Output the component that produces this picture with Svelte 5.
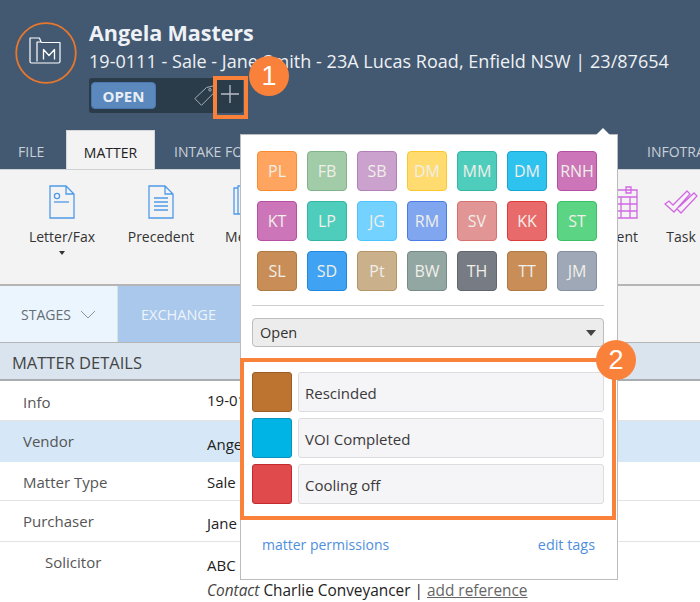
<script>
  const swatches = [
    ['PL','#ffa55f','#f98a2d'],['FB','#a2cba8','#7fb488'],['SB','#cba2cd','#b37fb8'],['DM','#ffdb70','#fcc62e'],['MM','#4ecdbd','#35b5a5'],['DM','#2ec3ef','#16a6d2'],['RNH','#cc75b8','#b64fa2'],
    ['KT','#cc75b8','#b64fa2'],['LP','#4ecdbd','#35b5a5'],['JG','#73d2ff','#4dc4fd'],['RM','#80a6f0','#4a7ce6'],['SV','#e29595','#d97070'],['KK','#e96a6a','#dd3a3a'],['ST','#5bd583','#3fbe68'],
    ['SL','#c98d58','#ae7a40'],['SD','#40a2f2','#1f88dd'],['Pt','#cbb08c','#b59565'],['BW','#92a6a2','#768b87'],['TH','#777b84','#63666f'],['TT','#c98d58','#ae7a40'],['JM','#9fa8b6','#858fa0']
  ];
  const tags = [
    ['Rescinded','#bd7431','#9a5d26'],['VOI Completed','#00b4e6','#0a93bb'],['Cooling off','#e04a4c','#c4292c']
  ];
  const rows = [
    ['Info','19-0111',''],['Vendor','Angela Masters','sel'],['Matter Type','Sale',''],['Purchaser','Jane Smith',''],['Solicitor','ABC Conveyancing','sub']
  ];
</script>

<div class="page">
  <header class="head">
    <div class="top">
      <div class="logo">
        <svg width="62" height="62" viewBox="0 0 62 62" fill="none">
          <circle cx="31" cy="31" r="29.8" stroke="#e8772e" stroke-width="1.8"/>
          <g stroke="#fff" stroke-width="1.2" stroke-linejoin="round">
            <path d="M22 41h-5.5a1.5 1.5 0 0 1-1.5-1.5V16h9.5l1.5 4"/>
            <path d="M22 41h21.5a1.5 1.5 0 0 0 1.5-1.5V20.5H27l-1-.5h-4V39.5"/>
            <path d="M28.5 37.5V27.5l5.5 6 5.5-6v10" stroke-width="1.3"/>
          </g>
        </svg>
      </div>
      <div class="titles">
        <h1>Angela Masters</h1>
        <p>19-0111 - Sale - Jane Smith - 23A Lucas Road, Enfield NSW | 23/87654</p>
        <div class="tagbar">
          <span class="open">OPEN</span>
          <svg class="tagicon" width="21" height="21" viewBox="0 0 21 21" fill="none" stroke="#a5aeb6" stroke-width="1">
            <path d="M.8 13.5 12.5 2.5 20 .8l-.8 7.7L7.5 20.3z"/><circle cx="16" cy="4.8" r="1.3"/>
          </svg>
          <svg class="plus" width="20" height="20" viewBox="0 0 20 20" stroke="#b9c0c6" stroke-width="1.3"><path d="M10 1v18M1 10h18"/></svg>
        </div>
      </div>
    </div>
    <nav class="tabs">
      <span class="tab t1">FILE</span>
      <span class="tab active">MATTER</span>
      <span class="tab t3">INTAKE FORMS</span>
      <span class="tab t4">INFOTRACK</span>
    </nav>
  </header>

  <section class="ribbon">
    <div class="rib letter">
      <svg width="26" height="34" viewBox="0 0 26 34" fill="none" stroke="#4f9ae8" stroke-width="1.3">
        <path d="M1 1h16l8 8v24H1zM17 1v8h8"/><circle cx="8" cy="11" r="2.6"/><path d="M5 17h15"/>
      </svg>
      <span>Letter/Fax</span>
      <i class="caret"></i>
    </div>
    <div class="rib prec">
      <svg width="26" height="34" viewBox="0 0 26 34" fill="none" stroke="#4f9ae8" stroke-width="1.3">
        <path d="M1 1h16l8 8v24H1zM17 1v8h8M6 13h14M6 17h14M6 21h14M6 25h14"/>
      </svg>
      <span>Precedent</span>
    </div>
    <div class="rib memo">
      <svg width="26" height="34" viewBox="0 0 26 34" fill="none" stroke="#4f9ae8" stroke-width="1.3">
        <path d="M5 3H1v26h4zM5 1h20v28H5zM9 8h10v6H9z"/>
      </svg>
      <span>Memo</span>
    </div>
    <div class="spacer"></div>
    <div class="rib appt">
      <svg width="26" height="34" viewBox="0 0 26 34" fill="none" stroke="#d268e3" stroke-width="1.3">
        <path d="M1 5h24v28H1zM14 2h5v6h-5zM1 12h24M1 19h24M1 26h24M9 12v21M18 12v21"/>
      </svg>
      <span>Appointment</span>
    </div>
    <div class="rib task">
      <svg width="34" height="26" viewBox="0 0 34 26" fill="none" stroke="#d268e3" stroke-width="1.3">
        <path d="M1 14l4-3 4 4L23 1l3 3L10 22zM13 19l4 4 16-17-3-3-15 14"/>
      </svg>
      <span>Task</span>
    </div>
  </section>

  <section class="stages">
    <div class="stage-label">
      <span>STAGES</span>
      <svg width="16" height="9" viewBox="0 0 16 9" fill="none" stroke="#8b9299"><path d="M1 1l7 7 7-7"/></svg>
    </div>
    <div class="exchange">EXCHANGE</div>
  </section>

  <div class="section-head">MATTER DETAILS</div>

  <div class="rows">
    {#each rows as r}
      <div class="row {r[2]}">
        <span class="k">{r[0]}</span>
        <span class="v">{r[1]}</span>
      </div>
    {/each}
    <div class="contact"><em>Contact</em> Charlie Conveyancer | <u>add reference</u></div>
  </div>

  <aside class="pop">
    <i class="arrow"></i>
    <div class="grid">
      {#each swatches as s}
        <span class="sw" style="background:{s[1]};border-color:{s[2]}">{s[0]}</span>
      {/each}
    </div>
    <hr />
    <div class="select"><span>Open</span><i></i></div>
    <div class="taglist">
      {#each tags as t}
        <div class="tagrow">
          <span class="tsw" style="background:{t[1]};border-color:{t[2]}"></span>
          <span class="tname">{t[0]}</span>
        </div>
      {/each}
    </div>
    <div class="links"><span>matter permissions</span><span>edit tags</span></div>
  </aside>

  <div class="mark box1"></div>
  <div class="mark box2"></div>
  <div class="badge b1">1</div>
  <div class="badge b2">2</div>
</div>

<style>
  :global(body) { margin: 0; }
  .page {
    position: relative; width: 700px; height: 602px; overflow: hidden; background: #fff;
    font-family: "Open Sans", "Noto Sans", sans-serif; color: #333;
  }
  .head { height: 169px; background: #435971; display: flex; flex-direction: column; box-sizing: border-box; }
  .top { display: flex; height: 130px; padding: 22px 0 0 15px; box-sizing: border-box; }
  .logo { width: 74px; flex: none; height: 62px; }
  .logo svg { display: block; }
  .titles { flex: 1; min-width: 0; }
  h1 { margin: -2px 0 0; font-size: 21.6px; line-height: 26px; font-weight: 700; color: #eef1f5; letter-spacing: -.1px; }
  p { margin: 2px 0 0; font-size: 18px; line-height: 26px; color: #eef1f5; white-space: nowrap; letter-spacing: .03px; }
  .tagbar {
    margin-top: 4px; width: 154px; height: 35px; background: #2a3b4a; border-radius: 3px;
    display: flex; align-items: center; position: relative;
  }
  .open {
    margin-left: 2px; width: 65px; height: 27px; box-sizing: border-box; background: #5b88bd; border: 1px solid #4a77ad;
    border-radius: 4px; color: #e9eef4; font-weight: 700; font-size: 15px; line-height: 26px; text-align: center;
  }
  .tagicon { margin-left: 38px; }
  .plus { margin-left: 5px; margin-top: -3px; }
  .tabs { height: 39px; position: relative; display: flex; }
  .tab { flex: none; box-sizing: border-box; font-size: 14px; line-height: 44px; color: #c9d0d8; white-space: nowrap; }
  .t1 { margin-left: 18px; width: 48px; }
  .active {
    width: 89px; height: 39px; background: #f3f3f3; color: #222; border: 1px solid #d4d6d8; border-bottom: 0;
    text-align: center; line-height: 43px;
  }
  .t3 { margin-left: 19px; width: 200px; }
  .t4 { margin-left: 273px; }

  .ribbon {
    height: 117px; box-sizing: border-box; background: #f3f3f3; border-top: 1px solid #cfd3d6; border-bottom: 2px solid #b5b5b5;
    display: flex; position: relative; padding-top: 15px;
  }
  .rib { display: flex; flex-direction: column; align-items: center; width: 100px; flex: none; font-size: 14px; color: #333; }
  .rib span { margin-top: 7px; line-height: 22px; white-space: nowrap; }
  .letter { margin-left: 12px; }
  .prec { margin-left: -1px; }
  .memo { margin-left: -15px; }
  .spacer { flex: 1; }
  .appt { width: 90px; margin-right: 24px; align-items: flex-end; }
  .task { width: 38px; padding-top: 5px; }
  .task span { margin-top: 10px; }
  .caret { display: block; width: 0; height: 0; margin-top: 3px; border: 3.5px solid transparent; border-top: 4px solid #333; border-bottom: 0; }

  .stages { height: 57px; display: flex; background: #f3f3f3; border-bottom: 1px solid #b5b5b5; box-sizing: border-box; }
  .stage-label {
    width: 118px; background: #ebf5fe; border-right: 1px solid #d8e0e8; display: flex; align-items: center; padding-left: 21px; box-sizing: border-box;
    font-size: 14px; color: #666d74; gap: 9px;
  }
  .exchange {
    width: 200px; background: #a9c8ec; color: #eef4fb; font-size: 14.5px; display: flex; align-items: center; padding-left: 23px; box-sizing: border-box;
  }
  .section-head {
    height: 38px; box-sizing: border-box; background: #d9e4ee; border-bottom: 2px solid #a9adb1; padding-left: 12px;
    font-size: 16.5px; line-height: 40px; color: #444;
  }
  .rows { font-size: 15px; }
  .row { display: flex; box-sizing: border-box; border-bottom: 1px solid #e3e3e3; }
  .row.sel { background: #d6e8f7; border: 0; }
  .k { width: 207px; padding-left: 23px; box-sizing: border-box; color: #555; }
  .sub .k { padding-left: 45px; }
  .v { color: #222; white-space: nowrap; }
  .row:nth-child(1) { height: 40px; }
  .row:nth-child(1) .k { line-height: 42px; }
  .row:nth-child(1) .v { line-height: 38px; }
  .row:nth-child(2) { height: 41px; }
  .row:nth-child(2) .k { line-height: 40px; }
  .row:nth-child(2) .v { line-height: 46px; }
  .row:nth-child(3) { height: 39px; }
  .row:nth-child(3) .k { line-height: 41px; }
  .row:nth-child(3) .v { line-height: 40px; }
  .row:nth-child(4) { height: 41px; }
  .row:nth-child(4) .k { line-height: 40px; }
  .row:nth-child(4) .v { line-height: 44px; }
  .row:nth-child(5) { height: 39px; border: 0; }
  .row:nth-child(5) .k { line-height: 41px; }
  .row:nth-child(5) .v { line-height: 46px; }
  .contact { padding-left: 207px; font-size: 15.4px; line-height: 20px; color: #222; white-space: nowrap; }
  .contact u { color: #666; }
  .contact em { color: #444; }

  .pop {
    position: absolute; left: 240px; top: 134px; width: 378px; height: 446px; box-sizing: border-box; background: #fff;
    border: 1px solid #bcbcbc; padding: 16px 13px 0 11px;
  }
  .arrow {
    position: absolute; right: 7px; top: -7px; width: 0; height: 0;
    border-left: 7px solid transparent; border-right: 7px solid transparent; border-bottom: 7px solid #fff;
  }
  .grid { display: grid; grid-template-columns: repeat(7, 40px); grid-auto-rows: 40px; gap: 10px; padding-left: 5px; }
  .sw {
    box-sizing: border-box; border: 1px solid; border-radius: 4px; color: #f0efe9; font-size: 16px; line-height: 38px; text-align: center; white-space: nowrap;
  }
  hr { margin: 14px 0 12px; border: 0; border-top: 1px solid #cfcfcf; }
  .select {
    height: 29px; box-sizing: border-box; background: #ececec; border: 1px solid #bdbdbd; border-radius: 4px; padding-left: 7px;
    display: flex; align-items: center; justify-content: space-between; font-size: 14.5px; color: #333;
  }
  .select i { margin-right: 7px; border: 5px solid transparent; border-top: 6px solid #444; border-bottom: 0; }
  .taglist { margin-top: 25px; display: flex; flex-direction: column; gap: 6px; }
  .tagrow { display: flex; gap: 6px; height: 40px; }
  .tsw { width: 40px; box-sizing: border-box; border: 1px solid; border-radius: 3px; }
  .tname {
    flex: 1; box-sizing: border-box; background: #f5f4f7; border: 1px solid #dddde0; border-radius: 3px; padding-left: 6px;
    font-size: 15px; line-height: 40px; color: #3a3a3a;
  }
  .links { display: flex; justify-content: space-between; margin-top: 31px; padding: 0 9px 0 10px; font-size: 14px; line-height: 20px; color: #4f90dd; }
  .links span:last-child { font-size: 14.4px; }

  .mark { position: absolute; border: 4px solid #f9813a; box-sizing: border-box; }
  .box1 { left: 213px; top: 76px; width: 35px; height: 43px; }
  .box2 { left: 240px; top: 358px; width: 376px; height: 162px; }
  .badge {
    position: absolute; width: 40px; height: 40px; border-radius: 50%; background: #f9813a; color: #fff;
    font-family: "Liberation Sans", sans-serif; font-size: 27px; line-height: 40px; text-align: center;
  }
  .b1 { left: 249px; top: 56px; }
  .b2 { left: 596px; top: 340px; }
</style>
